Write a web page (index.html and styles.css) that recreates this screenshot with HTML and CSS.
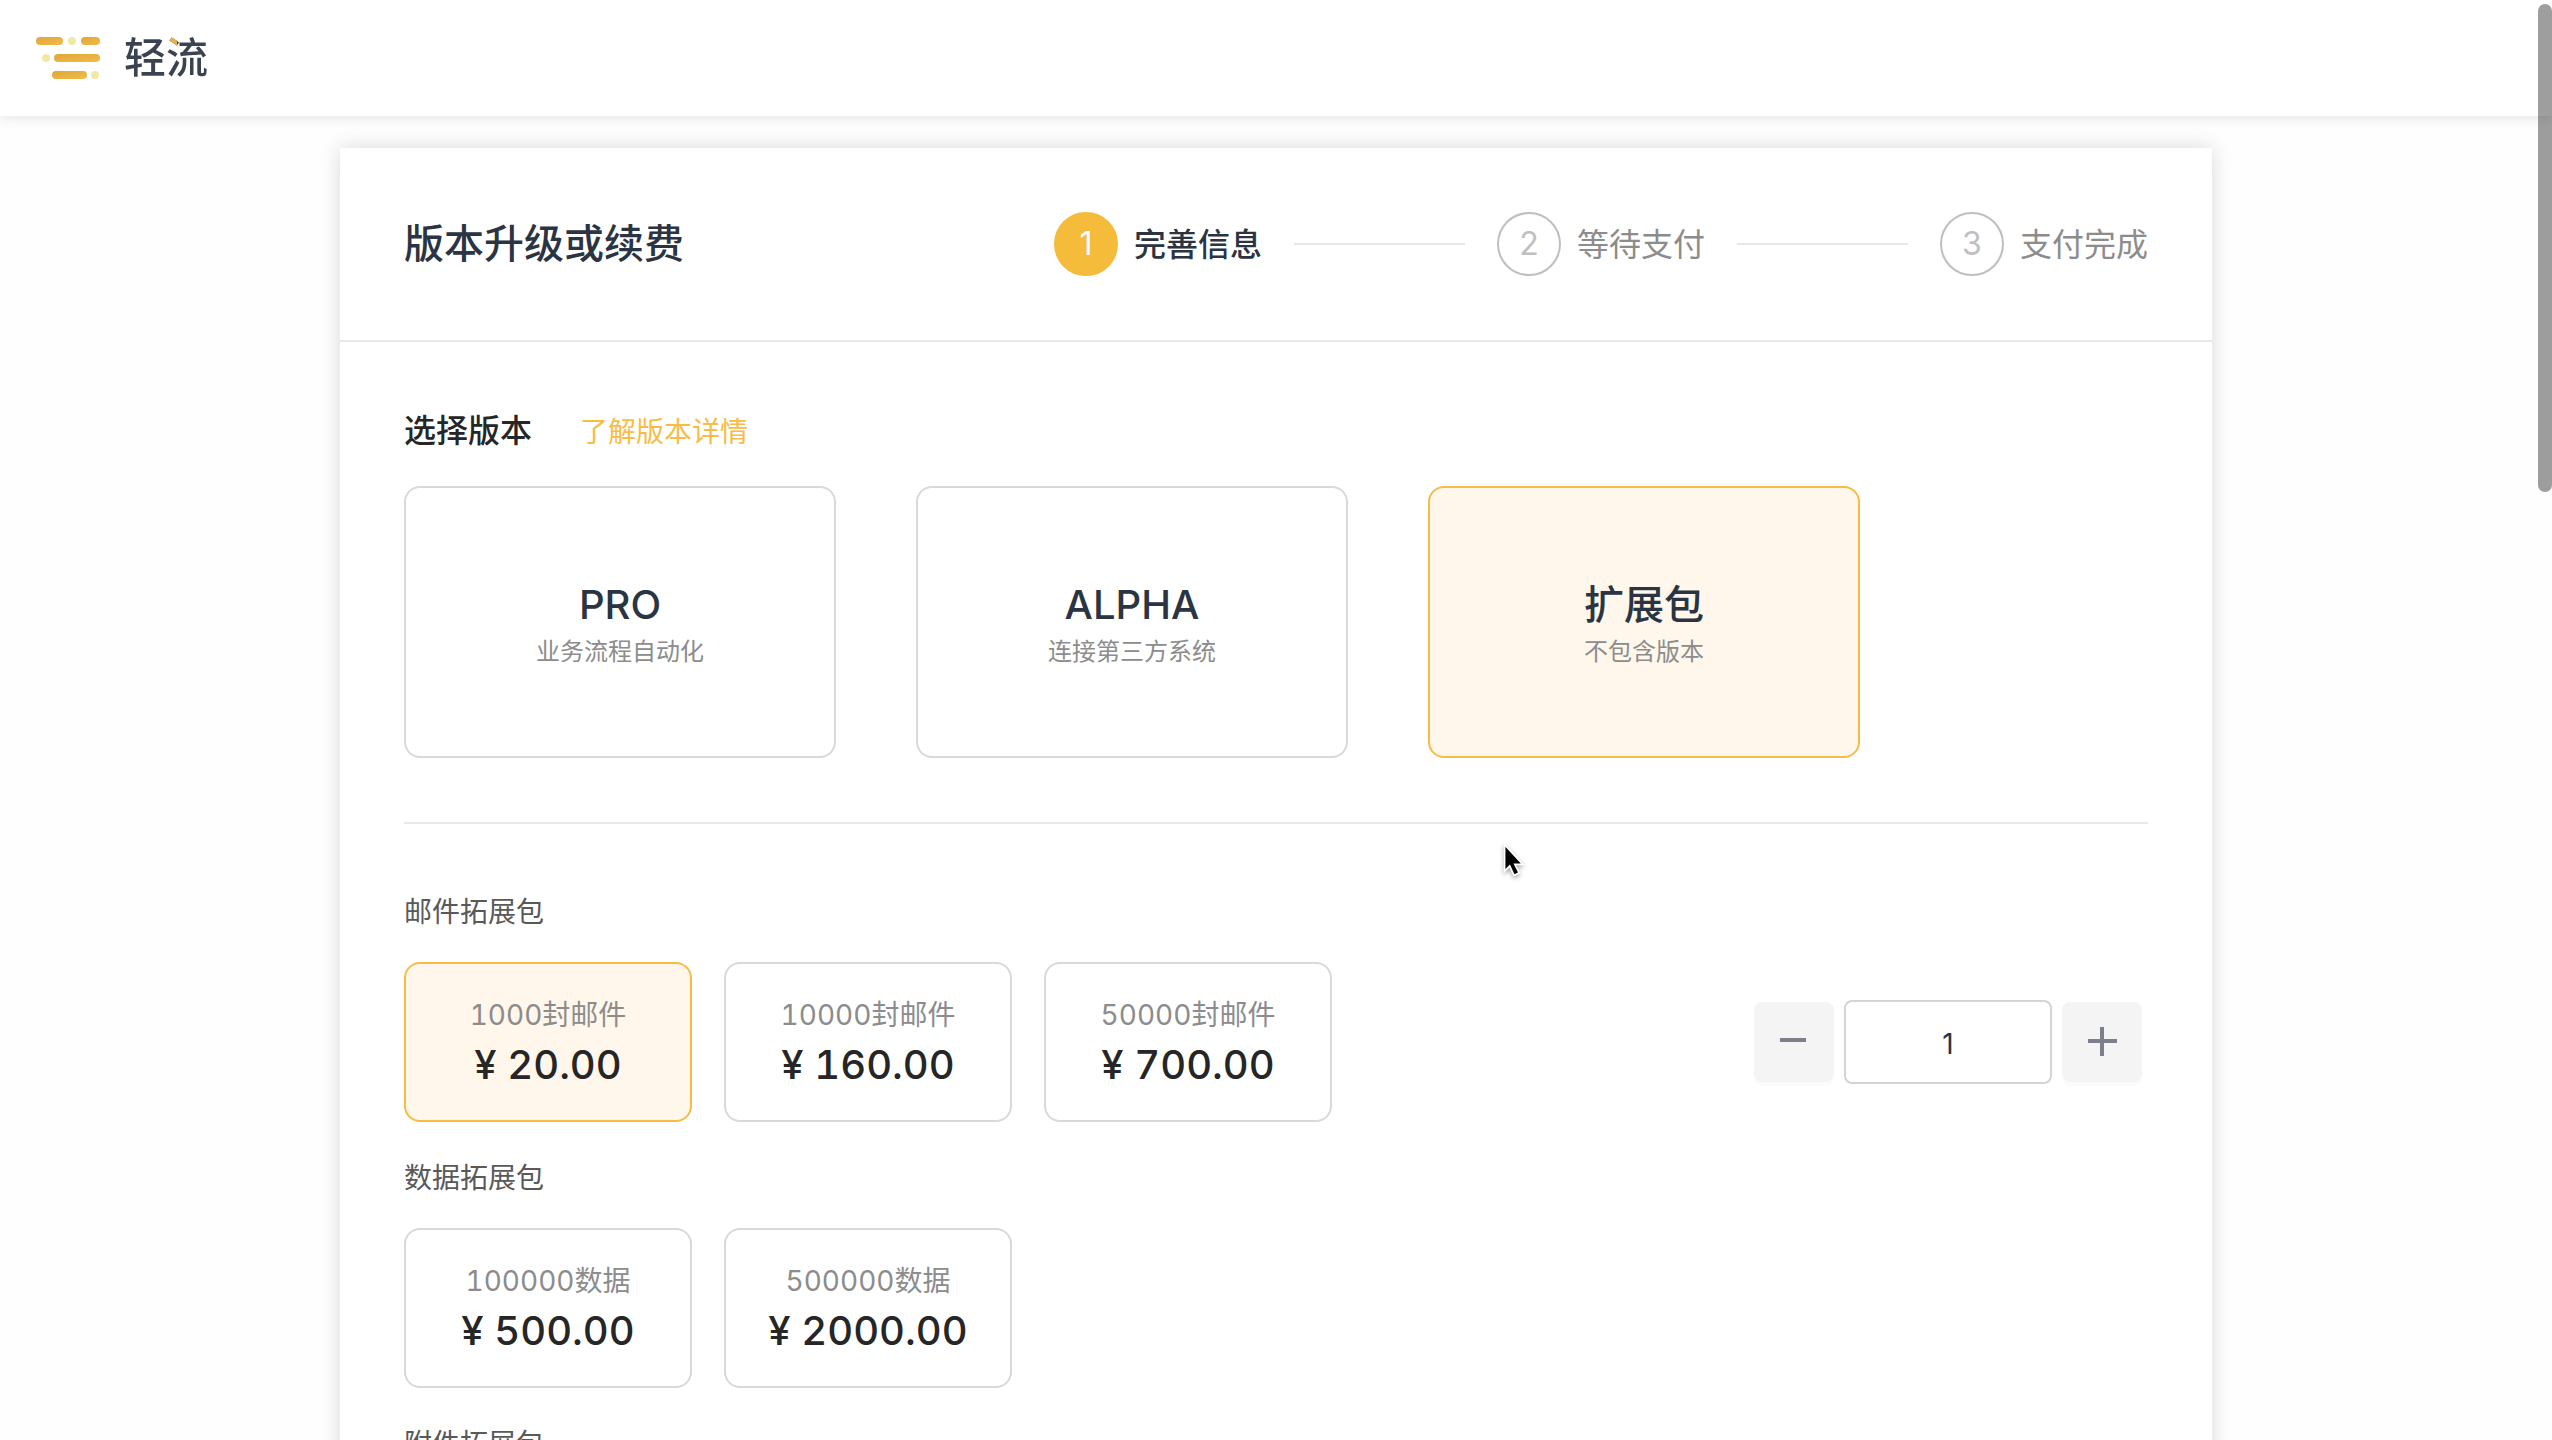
FILE: index.html
```html
<!DOCTYPE html>
<html lang="zh-CN">
<head>
  <meta charset="utf-8">
  <meta name="viewport" content="width=device-width, initial-scale=1">
  <title>轻流 - 版本升级或续费</title>
  <link rel="stylesheet" href="styles.css">
</head>
<body>
  <div class="page">
    <header class="topbar">
      <a class="brand" href="#">
        <svg class="brand-mark" viewBox="0 0 64 42" aria-hidden="true">
          <defs>
            <linearGradient id="gold" x1="0" y1="0" x2="1" y2="1">
              <stop offset="0" stop-color="#e0a638"/>
              <stop offset="1" stop-color="#f0bc4b"/>
            </linearGradient>
          </defs>
          <rect x="0" y="0" width="27" height="8" rx="4" fill="url(#gold)"/>
          <circle cx="36" cy="4" r="4" fill="#f0e8a4"/>
          <rect x="45" y="0" width="19" height="8" rx="4" fill="url(#gold)"/>
          <circle cx="10" cy="21" r="4" fill="#f0e8a4"/>
          <rect x="18" y="17" width="46" height="8" rx="4" fill="url(#gold)"/>
          <rect x="16" y="34" width="35" height="8" rx="4" fill="url(#gold)"/>
          <circle cx="59" cy="38" r="4" fill="#f0e8a4"/>
        </svg>
        <span class="brand-name">轻流</span>
      </a>
    </header>

    <main class="panel">
      <div class="panel-head">
        <h1 class="panel-title">版本升级或续费</h1>
        <ol class="steps">
          <li class="step step-active" aria-current="step"><span class="step-num">1</span><span class="step-label">完善信息</span></li>
          <li class="step-line" aria-hidden="true"></li>
          <li class="step"><span class="step-num">2</span><span class="step-label">等待支付</span></li>
          <li class="step-line" aria-hidden="true"></li>
          <li class="step"><span class="step-num">3</span><span class="step-label">支付完成</span></li>
        </ol>
      </div>

      <div class="panel-body">
        <section class="plans">
          <div class="plans-head">
            <h2 class="plans-title">选择版本</h2>
            <a class="plans-link" href="#">了解版本详情</a>
          </div>
          <div class="plan-list">
            <button type="button" class="option plan"><span class="plan-name">PRO</span><span class="plan-desc">业务流程自动化</span></button>
            <button type="button" class="option plan"><span class="plan-name">ALPHA</span><span class="plan-desc">连接第三方系统</span></button>
            <button type="button" class="option plan selected" aria-pressed="true"><span class="plan-name">扩展包</span><span class="plan-desc">不包含版本</span></button>
          </div>
        </section>

        <section class="group">
          <h3 class="group-title">邮件拓展包</h3>
          <div class="group-row">
            <div class="pack-list">
              <button type="button" class="option pack selected" aria-pressed="true"><span class="pack-size">1000封邮件</span><span class="pack-price">¥ 20.00</span></button>
              <button type="button" class="option pack"><span class="pack-size">10000封邮件</span><span class="pack-price">¥ 160.00</span></button>
              <button type="button" class="option pack"><span class="pack-size">50000封邮件</span><span class="pack-price">¥ 700.00</span></button>
            </div>
            <div class="counter">
              <button type="button" class="counter-btn" aria-label="减少">
                <svg class="counter-icon" viewBox="0 0 32 32" aria-hidden="true"><path d="M2 14h26" /></svg>
              </button>
              <input class="counter-input" type="text" inputmode="numeric" value="1" aria-label="数量">
              <button type="button" class="counter-btn" aria-label="增加">
                <svg class="counter-icon" viewBox="0 0 32 32" aria-hidden="true"><path d="M2 15h29M16 1v29" /></svg>
              </button>
            </div>
          </div>
        </section>

        <section class="group">
          <h3 class="group-title">数据拓展包</h3>
          <div class="group-row">
            <div class="pack-list">
              <button type="button" class="option pack"><span class="pack-size">100000数据</span><span class="pack-price">¥ 500.00</span></button>
              <button type="button" class="option pack"><span class="pack-size">500000数据</span><span class="pack-price">¥ 2000.00</span></button>
            </div>
          </div>
        </section>

        <section class="group">
          <h3 class="group-title">附件拓展包</h3>
        </section>
      </div>
    </main>
  </div>

  <div class="scroll-thumb" aria-hidden="true"></div>
  <svg class="cursor" viewBox="0 0 28 42" aria-hidden="true">
    <path d="M3 3v31l6-6 5 11 6-3-5-10h9z" fill="#000" stroke="#fff" stroke-width="2"/>
  </svg>
</body>
</html>
```
FILE: styles.css
```css
:root {
  --gold: #f5bb3b;
  --gold-line: #f7bc45;
  --gold-soft: #fff7eb;
  --navy: #2b3442;
  --ink: #262626;
  --muted: #8c8c8c;
  --rule: #e8e8e8;
}

* {
  box-sizing: border-box;
}

body {
  margin: 0;
  background: #fefefe;
  color: var(--ink);
  font-family: Inter, "Noto Sans CJK SC", sans-serif;
  font-size: 28px;
  line-height: 44px;
}

h1, h2, h3, ol {
  margin: 0;
  padding: 0;
  font-weight: 400;
}

button, input {
  margin: 0;
  font: inherit;
  color: inherit;
}

.page {
  height: 100vh;
  overflow-y: auto;
  scrollbar-width: none;
}

.topbar {
  display: flex;
  align-items: center;
  height: 116px;
  padding: 0 36px;
  background: #fff;
  box-shadow: 0 2px 12px rgba(0, 0, 0, 0.1);
}

.brand {
  display: flex;
  align-items: center;
  gap: 24px;
  text-decoration: none;
}

.brand-mark {
  width: 64px;
  height: 42px;
}

.brand-name {
  font-size: 42px;
  line-height: 48px;
  font-weight: 500;
  color: transparent;
  background: linear-gradient(#eab04a, #eab04a) 42px 0 / 11px 15px no-repeat, #3b4351;
  -webkit-background-clip: text;
  background-clip: text;
}

.panel {
  width: calc(100% - 64px);
  max-width: 1872px;
  margin: 32px auto;
  background: #fff;
  box-shadow: 0 0 20px rgba(0, 0, 0, 0.15);
}

.panel-head {
  display: flex;
  align-items: center;
  justify-content: space-between;
  gap: 64px;
  padding: 64px;
  border-bottom: 2px solid var(--rule);
}

.panel-title {
  color: var(--navy);
  font-size: 40px;
  line-height: 64px;
  font-weight: 500;
  white-space: nowrap;
}

.steps {
  display: flex;
  flex: 0 1 1094px;
  align-items: center;
  gap: 32px;
  list-style: none;
  font-size: 32px;
}

.step {
  display: flex;
  align-items: center;
  gap: 16px;
  color: var(--muted);
  white-space: nowrap;
}

.step-num {
  display: flex;
  align-items: center;
  justify-content: center;
  width: 64px;
  height: 64px;
  border: 2px solid #bfbfbf;
  border-radius: 50%;
  color: #bfbfbf;
}

.step-label {
  padding-top: 2px;
}

.step-active {
  color: var(--navy);
  font-weight: 500;
}

.step-active .step-num {
  border-color: var(--gold);
  background: var(--gold);
  color: #fff;
  font-weight: 400;
}

.step-line {
  flex: 1;
  height: 2px;
  background: var(--rule);
}

.panel-body {
  padding: 64px;
}

.plans {
  padding-bottom: 64px;
  border-bottom: 2px solid var(--rule);
  margin-bottom: 64px;
}

.plans-head {
  display: flex;
  align-items: center;
  gap: 48px;
  margin-bottom: 30px;
}

.plans-title {
  font-size: 32px;
  line-height: 50px;
  font-weight: 500;
}

.plans-link {
  padding-top: 2px;
  color: var(--gold-line);
  text-decoration: none;
}

.plan-list {
  display: flex;
  flex-wrap: wrap;
  gap: 80px;
}

.option {
  display: flex;
  flex-direction: column;
  align-items: center;
  justify-content: center;
  padding: 0;
  border: 2px solid #d9d9d9;
  border-radius: 16px;
  background: #fff;
  cursor: pointer;
}

.option.selected {
  border-color: var(--gold-line);
  background: var(--gold-soft);
}

.plan {
  width: 432px;
  height: 272px;
  padding-top: 4px;
}

.plan-name {
  color: var(--navy);
  font-size: 40px;
  line-height: 56px;
  font-weight: 500;
}

.plan-desc {
  color: var(--muted);
  font-size: 24px;
  line-height: 38px;
}

.group {
  margin-bottom: 32px;
}

.group-title {
  padding-top: 2px;
  margin-bottom: 28px;
  color: #595959;
  font-size: 28px;
}

.group-row {
  display: flex;
  align-items: center;
  justify-content: space-between;
  gap: 32px;
}

.pack-list {
  display: flex;
  flex-wrap: wrap;
  gap: 32px;
}

.pack {
  width: 288px;
  height: 160px;
  padding-top: 2px;
  font-variant-numeric: tabular-nums;
}

.pack-size {
  color: var(--muted);
}

.pack-price {
  font-size: 40px;
  line-height: 56px;
  font-weight: 500;
}

.counter {
  display: flex;
  align-items: center;
  gap: 10px;
  padding-right: 6px;
}

.counter-btn {
  display: flex;
  align-items: center;
  justify-content: center;
  width: 80px;
  height: 80px;
  padding: 0;
  border: 0;
  border-radius: 8px;
  background: #f4f4f4;
  box-shadow: 0 4px 0 rgba(0, 0, 0, 0.016);
  cursor: pointer;
}

.counter-icon {
  width: 32px;
  height: 32px;
  fill: none;
  stroke: #7b808b;
  stroke-width: 4;
}

.counter-input {
  width: 208px;
  height: 84px;
  padding: 4px 8px 0;
  border: 2px solid #d3d3d9;
  border-radius: 8px;
  background: #fff;
  color: var(--navy);
  text-align: center;
}

.scroll-thumb {
  position: fixed;
  top: 4px;
  right: 0;
  width: 14px;
  height: 488px;
  border-radius: 7px;
  background: rgba(0, 0, 0, 0.38);
}

.cursor {
  position: fixed;
  top: 841px;
  left: 1502px;
  width: 24px;
  height: 38px;
  filter: drop-shadow(0 2px 2px rgba(0, 0, 0, 0.35));
  pointer-events: none;
}
```
